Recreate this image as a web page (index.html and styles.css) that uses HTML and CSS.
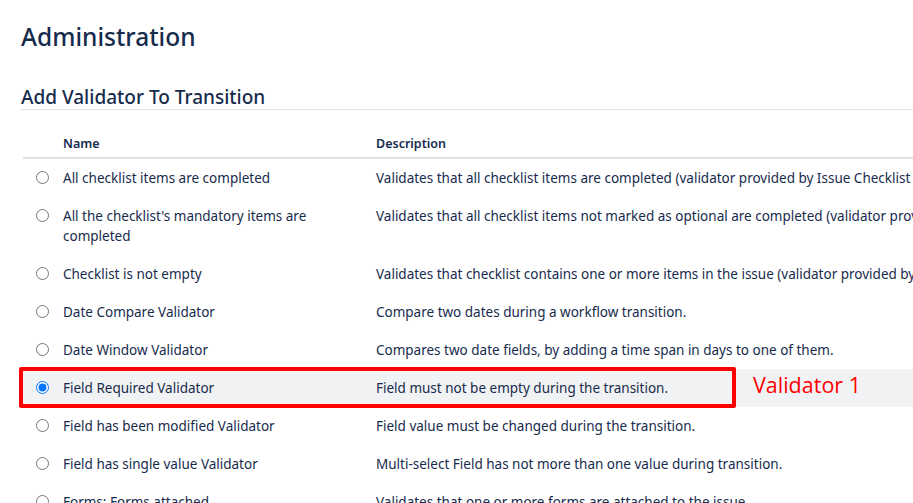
FILE: index.html
```html
<!DOCTYPE html>
<html lang="en">
<head>
    <meta charset="UTF-8">
    <title>Administration</title>
    <link rel="stylesheet" href="styles.css">
</head>
<body>

    <div class="page">
        <h1>Administration</h1>
        <h2 class="section-title">Add Validator To Transition</h2>

        <table class="validators">
            <thead>
                <tr>
                    <th class="col-radio"></th>
                    <th class="col-name">Name</th>
                    <th>Description</th>
                </tr>
            </thead>
            <tbody>
                <tr>
                    <td class="col-radio"><input type="radio" name="validator"></td>
                    <td class="col-name">All checklist items are completed</td>
                    <td>Validates that all checklist items are completed (validator provided by Issue Checklist for Jira)</td>
                </tr>
                <tr>
                    <td class="col-radio"><input type="radio" name="validator"></td>
                    <td class="col-name">All the checklist's mandatory items are completed</td>
                    <td>Validates that all checklist items not marked as optional are completed (validator provided by Issue Checklist)</td>
                </tr>
                <tr>
                    <td class="col-radio"><input type="radio" name="validator"></td>
                    <td class="col-name">Checklist is not empty</td>
                    <td>Validates that checklist contains one or more items in the issue (validator provided by Issue Checklist)</td>
                </tr>
                <tr>
                    <td class="col-radio"><input type="radio" name="validator"></td>
                    <td class="col-name">Date Compare Validator</td>
                    <td>Compare two dates during a workflow transition.</td>
                </tr>
                <tr>
                    <td class="col-radio"><input type="radio" name="validator"></td>
                    <td class="col-name">Date Window Validator</td>
                    <td>Compares two date fields, by adding a time span in days to one of them.</td>
                </tr>
                <tr class="selected">
                    <td class="col-radio"><input type="radio" name="validator" checked></td>
                    <td class="col-name">Field Required Validator</td>
                    <td>Field must not be empty during the transition.</td>
                </tr>
                <tr>
                    <td class="col-radio"><input type="radio" name="validator"></td>
                    <td class="col-name">Field has been modified Validator</td>
                    <td>Field value must be changed during the transition.</td>
                </tr>
                <tr>
                    <td class="col-radio"><input type="radio" name="validator"></td>
                    <td class="col-name">Field has single value Validator</td>
                    <td>Multi-select Field has not more than one value during transition.</td>
                </tr>
                <tr>
                    <td class="col-radio"><input type="radio" name="validator"></td>
                    <td class="col-name">Forms: Forms attached</td>
                    <td>Validates that one or more forms are attached to the issue.</td>
                </tr>
            </tbody>
        </table>

        <!-- annotation drawn over the screenshot -->
        <div class="callout-box"></div>
        <div class="callout-label">Validator 1</div>
    </div>

</body>
</html>
```

FILE: styles.css
```css
/* General Styles */
body {
    margin: 0;
    font-family: "Noto Sans", "Open Sans", sans-serif;
    color: #172b4d;
    background: #fff;
    overflow: hidden;
}

.page {
    position: relative;
    padding: 21px 0 0 21px;
}

/* Headings */
h1 {
    margin: 0;
    font-size: 24.5px;
    font-weight: 500;
    line-height: 32px;
}

.section-title {
    margin: 32px 0 0;
    padding-bottom: 0;
    font-size: 19px;
    font-weight: 500;
    line-height: 24px;
    border-bottom: 1px solid #dfe1e6;
}

/* Table */
.validators {
    width: 1300px;
    margin: 18px 0 0 2px;
    border-collapse: collapse;
    font-size: 13.5px;
}

.validators th,
.validators td {
    padding: 9px 8px;
    line-height: 20px;
    text-align: left;
    vertical-align: top;
}

.validators th {
    padding-top: 6px;
    padding-bottom: 3px;
    font-size: 12.5px;
    font-weight: 600;
    border-bottom: 2px solid #dfe1e6;
}

.col-radio {
    width: 16px;
    padding-left: 13px !important;
    padding-right: 3px !important;
}

.col-name {
    width: 297px;
}

.validators input[type="radio"] {
    display: block;
    margin: 3px 0 0;
    width: 13px;
    height: 13px;
}

.selected td {
    background: #f1f2f4;
}

/* Annotation */
.callout-box {
    position: absolute;
    top: 367px;
    left: 19px;
    width: 709px;
    height: 33px;
    border: 4px solid #ff0000;
    border-radius: 2px;
}

.callout-label {
    position: absolute;
    top: 370px;
    left: 753px;
    font-family: "Open Sans", sans-serif;
    font-size: 21.5px;
    line-height: 30px;
    color: #ff0000;
}
```
